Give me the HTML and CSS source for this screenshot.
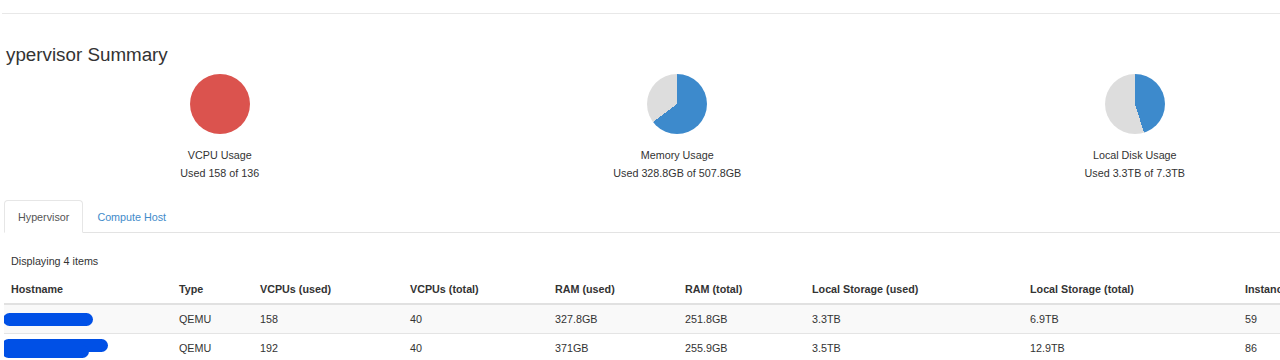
FILE: index.html
```html
<!DOCTYPE html>
<html lang="en">
<head>
    <meta charset="UTF-8">
    <title>Hypervisors</title>
    <link rel="stylesheet" href="styles.css">
</head>
<body>
    <div class="page">
        <div class="topbar"></div>
        <h3 class="title">ypervisor Summary</h3>

        <div class="pies">
            <div class="pie-item">
                <div class="pie pie-full"></div>
                <div class="pie-label">VCPU Usage</div>
                <div class="pie-label">Used 158 of 136</div>
            </div>
            <div class="pie-item">
                <div class="pie pie-mem"></div>
                <div class="pie-label">Memory Usage</div>
                <div class="pie-label">Used 328.8GB of 507.8GB</div>
            </div>
            <div class="pie-item">
                <div class="pie pie-disk"></div>
                <div class="pie-label">Local Disk Usage</div>
                <div class="pie-label">Used 3.3TB of 7.3TB</div>
            </div>
        </div>

        <ul class="tabs">
            <li class="tab active">Hypervisor</li>
            <li class="tab"><a href="#">Compute Host</a></li>
        </ul>

        <div class="table-wrap">
            <div class="count">Displaying 4 items</div>
            <table class="grid">
                <colgroup>
                    <col style="width:168px"><col style="width:81px"><col style="width:150px">
                    <col style="width:145px"><col style="width:130px"><col style="width:127px">
                    <col style="width:218px"><col style="width:215px"><col style="width:120px">
                </colgroup>
                <thead>
                    <tr>
                        <th>Hostname</th><th>Type</th><th>VCPUs (used)</th><th>VCPUs (total)</th>
                        <th>RAM (used)</th><th>RAM (total)</th><th>Local Storage (used)</th>
                        <th>Local Storage (total)</th><th>Instances</th>
                    </tr>
                </thead>
                <tbody>
                    <tr class="odd">
                        <td><span class="redact redact-a"></span></td><td>QEMU</td><td>158</td><td>40</td>
                        <td>327.8GB</td><td>251.8GB</td><td>3.3TB</td><td>6.9TB</td><td>59</td>
                    </tr>
                    <tr>
                        <td><span class="redact redact-b"></span><span class="redact redact-c"></span></td><td>QEMU</td><td>192</td><td>40</td>
                        <td>371GB</td><td>255.9GB</td><td>3.5TB</td><td>12.9TB</td><td>86</td>
                    </tr>
                </tbody>
            </table>
        </div>
    </div>
</body>
</html>
```

FILE: styles.css
```css
* { margin: 0; padding: 0; box-sizing: border-box; }
html, body { overflow: hidden; background: #fff; }
body {
    font-family: "Liberation Sans", Arial, sans-serif;
    font-size: 10.75px;
    color: #333;
    width: 1280px;
    height: 360px;
}
.page {
    margin-left: -9px;
    width: 1380px;
}
.topbar {
    margin: 0 0 0 11px;
    height: 14px;
    border-bottom: 1px solid #e8e8e8;
}

.title {
    font-size: 18.8px;
    font-weight: normal;
    line-height: 22px;
    margin-top: 30px;
    padding-left: 15px;
}

.pies { display: flex; margin-top: 8px; }
.pie-item {
    width: 457.5px;
    display: flex;
    flex-direction: column;
    align-items: center;
}
.pie {
    width: 60px;
    height: 60px;
    border-radius: 50%;
    margin-bottom: 12px;
}
.pie-full { background: #db534e; }
.pie-mem { background: conic-gradient(#3d8acc 0 64.7%, #dddddd 0); }
.pie-disk { background: conic-gradient(#3d8acc 0 45.2%, #dddddd 0); }
.pie-label { line-height: 18px; }

.tabs {
    list-style: none;
    display: flex;
    margin: 18px 0 0 13px;
    border-bottom: 1px solid #e3e3e3;
}
.tab {
    padding: 0 13px;
    height: 33px;
    line-height: 32px;
    margin-bottom: -1px;
    border: 1px solid transparent;
    border-radius: 4px 4px 0 0;
}
.tab.active {
    color: #555;
    background: #fff;
    border-color: #e6e6e6 #e6e6e6 #fff;
}
.tab a { color: #428bca; text-decoration: none; }

.table-wrap { padding-left: 13px; }
.count { margin: 19px 0 0 7px; line-height: 18px; }
.grid {
    border-collapse: collapse;
    table-layout: fixed;
    width: 1354px;
    margin-top: 4px;
}
.grid th, .grid td {
    text-align: left;
    padding: 0 7px;
    white-space: nowrap;
    overflow: hidden;
}
.grid th {
    font-weight: bold;
    height: 30px;
    line-height: 14px;
    padding-top: 1px;
    border-bottom: 2px solid #e1e1e1;
}
.grid td {
    height: 29px;
    border-top: 1px solid #e4e4e4;
    position: relative;
}
.grid tr.odd td { background: #f9f9f9; }

.redact {
    display: block;
    background: #0050e6;
    border-radius: 7px;
    position: absolute;
}
.redact-a { left: -1px; top: 8px; width: 90px; height: 13px; }
.redact-b { left: -2px; top: 5px; width: 106px; height: 13px; }
.redact-c { left: -2px; top: 11px; width: 87px; height: 13px; }
```
